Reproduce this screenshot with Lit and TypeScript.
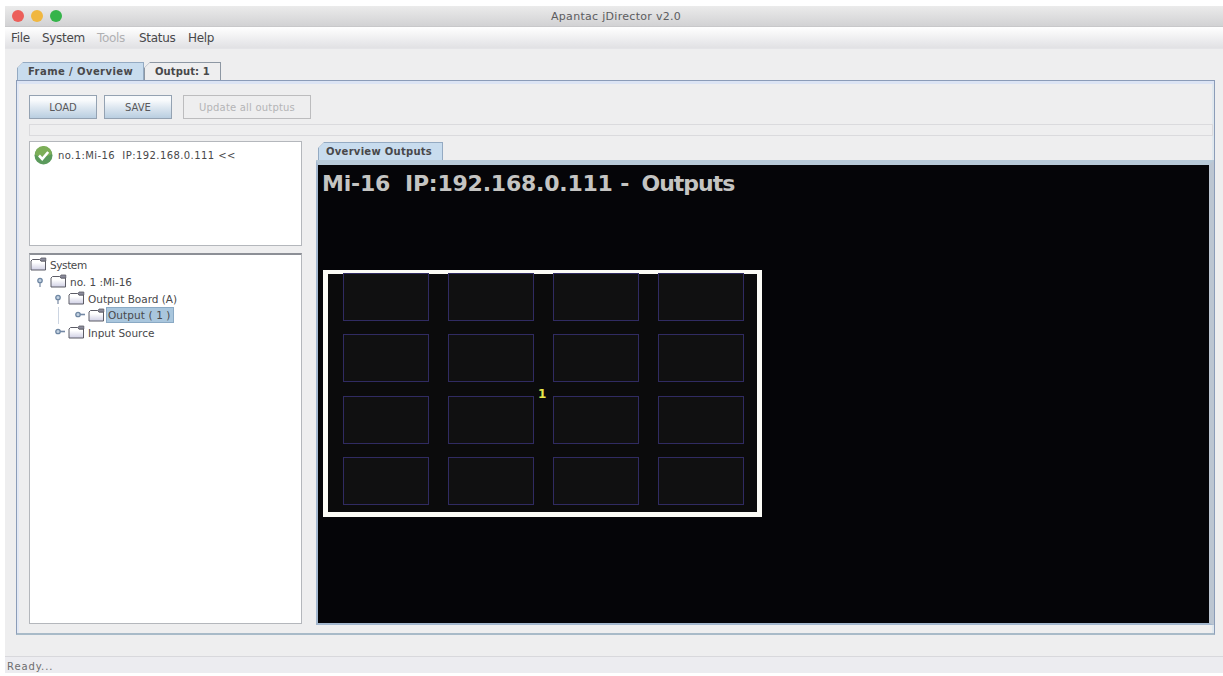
import { LitElement, html, css, svg } from 'lit';
import { customElement, property } from 'lit/decorators.js';
import { classMap } from 'lit/directives/class-map.js';

interface TreeNode {
  label: string;
  level: number;
  handle?: 'open' | 'closed';
  selected?: boolean;
}

@customElement('tree-row')
export class TreeRow extends LitElement {
  static override styles = css`
    :host {
      display: flex;
      align-items: center;
      height: 17.2px;
      font-size: 10.5px;
    }
    svg {
      display: block;
      flex: none;
    }
    .handle {
      width: 14px;
    }
    .folder {
      margin-right: 1px;
    }
    .label {
      height: 16px;
      line-height: 16px;
      padding: 0 1px;
      white-space: pre;
      letter-spacing: -0.02px;
      border: 1px solid transparent;
      box-sizing: border-box;
    }
    .root {
      letter-spacing: -0.4px;
    }
    .selected {
      background: #a9c6dd;
      border-color: #8aa9c4;
      line-height: 14px;
      padding-right: 2px;
      letter-spacing: 0.1px;
    }
    .indent {
      box-sizing: border-box;
      height: 100%;
    }
    .l1 {
      width: 6px;
    }
    .l2 {
      width: 24px;
    }
    .l3 {
      width: 16px;
      margin-left: 28px;
      border-left: 1px solid #ccd5e2;
    }
  `;

  @property({ attribute: false }) node: TreeNode = { label: '', level: 0 };

  renderHandle() {
    if (!this.node.handle) return '';
    const tail =
      this.node.handle === 'open'
        ? svg`<path d="M4 8v5" stroke="#8090a8" stroke-width="1.3" />`
        : svg`<path d="M6 6.5h5" stroke="#7488a4" stroke-width="1.6" />`;
    return html`<svg class="handle" width="14" height="14" viewBox="0 0 14 14">
      ${tail}
      <circle cx="4" cy="6.5" r="2.2" fill="#c3d2e2" stroke="#6f87a3" stroke-width="1.3" />
    </svg>`;
  }

  render() {
    const { label, level, selected } = this.node;
    return html`
      <div class="indent l${level}"></div>
      ${this.renderHandle()}
      <svg class="folder" width="17" height="14" viewBox="0 0 17 14">
        <defs>
          <linearGradient id="face" x1="0" y1="0" x2="0" y2="1">
            <stop offset="0.3" stop-color="#fff" />
            <stop offset="1" stop-color="#cfcfe4" />
          </linearGradient>
        </defs>
        <path d="M1 13V4l1.500-1.500h7L11 4h4.500v9z" fill="url(#face)" stroke="#5c5c66" />
        <path d="M10 2.700l1-1.700h4.800v3h-5z" fill="#8c8c9c" stroke="#5c5c66" stroke-width=".8" />
      </svg>
      <span class=${classMap({ label: true, root: level === 0, selected: !!selected })}
        >${label}</span
      >
    `;
  }
}

@customElement('output-wall')
export class OutputWall extends LitElement {
  static override styles = css`
    :host {
      display: block;
      position: relative;
      box-sizing: border-box;
      width: 439px;
      height: 247px;
      border: 5px solid #fbfbf6;
      border-top-width: 4px;
      background: #0b0b0c;
    }
    .cells {
      display: grid;
      grid-template-columns: repeat(4, 86px);
      grid-template-rows: repeat(4, 48px);
      column-gap: 19px;
      row-gap: 13.3px;
      margin: -1px 0 0 15px;
    }
    .cell {
      border: 1px solid #302b62;
      background: #101011;
    }
    .number {
      position: absolute;
      left: 210px;
      top: 113px;
      font-size: 12px;
      line-height: 14px;
      font-weight: bold;
      color: #e8e84c;
    }
  `;

  @property({ type: Number }) cells = 16;

  @property({ type: String }) number = '1';

  render() {
    return html`
      <div class="cells">
        ${Array.from({ length: this.cells }, () => html`<div class="cell"></div>`)}
      </div>
      <span class="number">${this.number}</span>
    `;
  }
}

@customElement('app-root')
export class AppRoot extends LitElement {
  static override styles = css`
    * {
      box-sizing: border-box;
    }
    :host {
      display: block;
      width: 1223px;
      height: 676px;
      padding: 6px 0 3px 5px;
      overflow: hidden;
      background: #fff;
      color: #48484a;
      font-family: 'DejaVu Sans', Verdana, sans-serif;
      font-size: 10px;
    }
    .window {
      display: flex;
      flex-direction: column;
      height: 667px;
      background: #eeeeef;
    }
    .titlebar {
      display: grid;
      grid-template-columns: 546px auto 1fr;
      align-items: center;
      height: 21px;
      background: linear-gradient(#ebebeb, #d2d2d4);
      border-bottom: 1px solid #c8c8ca;
    }
    .lights {
      display: flex;
      gap: 7px;
      padding-left: 7px;
    }
    .light {
      width: 12px;
      height: 12px;
      border-radius: 50%;
    }
    .red {
      background: #ec5f5a;
    }
    .amber {
      background: #f0b740;
    }
    .green {
      background: #35b44a;
    }
    .title {
      font-size: 11px;
      letter-spacing: 0.3px;
      white-space: nowrap;
      color: #5c5c5e;
    }
    .menubar {
      display: grid;
      grid-template-columns: 31px 55px 42px 49px auto;
      justify-content: start;
      align-items: center;
      height: 22px;
      padding: 1px 0 0 6px;
      font-size: 12px;
      letter-spacing: -0.3px;
      background: linear-gradient(#fff, #e1e1e4);
      border-bottom: 1px solid #e4e4e7;
    }
    .off {
      color: #b0b0b2;
    }
    .tabs {
      display: flex;
      align-items: flex-end;
      font-weight: bold;
      white-space: nowrap;
    }
    .tab {
      display: flex;
      align-items: center;
      height: 18px;
      border: 1px solid #8d97a3;
      border-bottom: 0;
      background: linear-gradient(135deg, #a4acb6 4.5px, #eeeeef 5px);
      background-origin: border-box;
      clip-path: polygon(6px 0, 100% 0, 100% 100%, 0 100%, 0 6px);
    }
    .active {
      background: linear-gradient(135deg, #a4b6ca 4.5px, #c8dcee 5px);
      background-origin: border-box;
      border-color: #94aac2;
    }
    .main-tabs {
      margin: 13px 0 0 12px;
    }
    .frame-tab {
      width: 127px;
      padding-left: 10px;
      letter-spacing: 0.42px;
    }
    .output-tab {
      width: 77px;
      padding-left: 10px;
      letter-spacing: 0.1px;
    }
    .frame {
      display: flex;
      flex-direction: column;
      width: 1199px;
      height: 555px;
      margin-left: 11px;
      padding: 12px 0 0 12px;
      border: 1px solid #8b9cb8;
      border-bottom: 2px solid #a8bac8;
      box-shadow: inset 0 3px 0 #dce4f4, inset 2px 0 0 #e2e8f4, inset -2px 0 0 #e0e8ee;
    }
    .toolbar {
      display: flex;
      padding-top: 2px;
    }
    button {
      height: 24px;
      padding: 0;
      border: 1px solid #94a2b2;
      border-radius: 0;
      background: linear-gradient(#f8fafc 20%, #dfe8f1 50%, #b9cee0);
      color: #58585a;
      font: inherit;
      font-size: 10px;
      letter-spacing: 0;
    }
    .load,
    .save {
      width: 68px;
      margin-right: 7px;
    }
    .update {
      width: 128px;
      margin-left: 4px;
      background: #eeeeef;
      border-color: #bcbcbe;
      color: #b4b4b6;
      letter-spacing: 0.2px;
    }
    .progress {
      width: 1184px;
      height: 12px;
      margin-top: 5px;
      border: 1px solid #dadadd;
    }
    .body {
      display: flex;
      gap: 14px;
      margin-top: 5px;
    }
    .side {
      display: flex;
      flex-direction: column;
      gap: 7px;
      width: 273px;
    }
    .devices {
      height: 105px;
      border: 1px solid #b4b7bc;
      background: #fff;
    }
    .device {
      display: flex;
      align-items: center;
      gap: 5px;
      padding: 4px 0 0 4px;
      white-space: pre;
      letter-spacing: 0.42px;
    }
    .tree {
      height: 371px;
      border: 1px solid #b4b7bc;
      border-top: 2px solid #8c8f96;
      background: #fff;
    }
    .overview-tab {
      width: 125px;
      margin-left: 2px;
      padding-left: 7px;
      letter-spacing: 0.28px;
      font-size: 10px;
    }
    .overview {
      padding-top: 1px;
    }
    .screen {
      width: 898px;
      height: 465px;
      border: 2px solid #a3b7ce;
      border-top: 5px solid #b8cad8;
      border-right: 5px solid #bcc6d2;
      background: #050508;
    }
    .heading {
      height: 105px;
      padding: 5px 0 0 4px;
      color: #c4c4c2;
      font-size: 22px;
      line-height: 28px;
      font-weight: bold;
      letter-spacing: -0.22px;
      white-space: pre;
    }
    .kind {
      margin-left: 5px;
      letter-spacing: -1px;
    }
    output-wall {
      margin-left: 5px;
    }
    .status {
      height: 17px;
      margin-top: auto;
      padding-left: 2px;
      border-top: 1px solid #d8d8dc;
      background: #ececf0;
      line-height: 19px;
      color: #6c6c6e;
      letter-spacing: 0.9px;
    }
  `;

  @property({ attribute: false }) nodes: TreeNode[] = [
    { label: 'System', level: 0 },
    { label: 'no. 1 :Mi-16', level: 1, handle: 'open' },
    { label: 'Output Board (A)', level: 2, handle: 'open' },
    { label: 'Output ( 1 )', level: 3, handle: 'closed', selected: true },
    { label: 'Input Source', level: 2, handle: 'closed' },
  ];

  render() {
    return html`
      <div class="window">
        <div class="titlebar">
          <div class="lights">
            <span class="light red"></span>
            <span class="light amber"></span>
            <span class="light green"></span>
          </div>
          <span class="title">Apantac jDirector v2.0</span>
        </div>
        <div class="menubar">
          <span>File</span>
          <span>System</span>
          <span class="off">Tools</span>
          <span>Status</span>
          <span>Help</span>
        </div>
        <div class="tabs main-tabs">
          <div class="tab active frame-tab">Frame / Overview</div>
          <div class="tab output-tab">Output: 1</div>
        </div>
        <div class="frame">
          <div class="toolbar">
            <button class="load">LOAD</button>
            <button class="save">SAVE</button>
            <button class="update">Update all outptus</button>
          </div>
          <div class="progress"></div>
          <div class="body">
            <div class="side">
              <div class="devices">
                <div class="device">
                  <svg width="19" height="19" viewBox="0 0 19 19">
                    <circle cx="9.500" cy="9.500" r="9" fill="#5b9a5c" />
                    <path d="M1 9a8.500 8.500 0 0 1 17-1q-8 5-17 1z" fill="#7cae58" />
                    <path d="M5 9.500l3.200 3.500 6-7" fill="none" stroke="#fff" stroke-width="2.600" />
                  </svg>
                  <span>no.1:Mi-16  IP:192.168.0.111 &lt;&lt;</span>
                </div>
              </div>
              <div class="tree">
                ${this.nodes.map((node) => html`<tree-row .node=${node}></tree-row>`)}
              </div>
            </div>
            <div class="overview">
              <div class="tabs">
                <div class="tab active overview-tab">Overview Outputs</div>
              </div>
              <div class="screen">
                <div class="heading">Mi-16  IP:192.168.0.111 - <span class="kind">Outputs</span></div>
                <output-wall></output-wall>
              </div>
            </div>
          </div>
        </div>
        <div class="status">Ready...</div>
      </div>
    `;
  }
}
